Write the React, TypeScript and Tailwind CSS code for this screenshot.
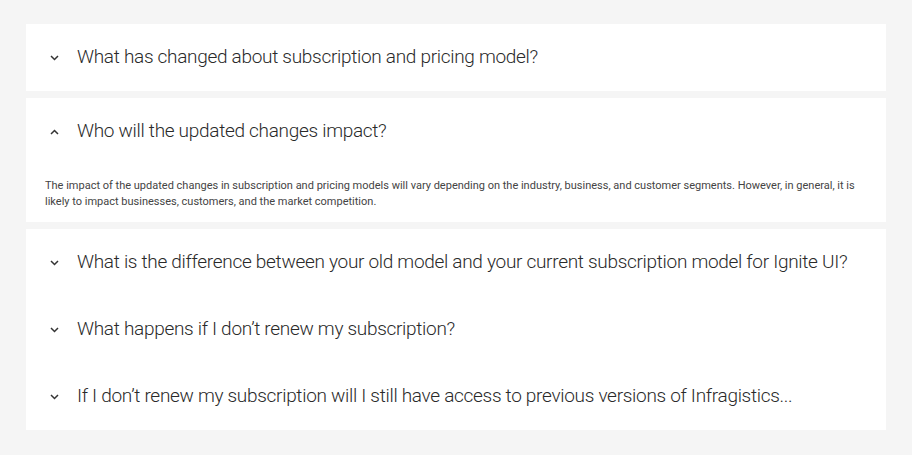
import { useState } from 'react'

const faqs = [
  { q: 'What has changed about subscription and pricing model?', a: '' },
  {
    q: 'Who will the updated changes impact?',
    a: 'The impact of the updated changes in subscription and pricing models will vary depending on the industry, business, and customer segments. However, in general, it is likely to impact businesses, customers, and the market competition.',
  },
  { q: 'What is the difference between your old model and your current subscription model for Ignite UI?', a: '' },
  { q: 'What happens if I don’t renew my subscription?', a: '' },
  { q: 'If I don’t renew my subscription will I still have access to previous versions of Infragistics...', a: '' },
]

function Chevron({ up }: { up: boolean }) {
  return (
    <svg width="9" height="6" viewBox="0 0 9 6" className={up ? 'rotate-180' : ''}>
      <polyline points="1,1 4.5,4.5 8,1" fill="none" stroke="#333" strokeWidth="1.5" />
    </svg>
  )
}

function Header({ q, open, onClick }: { q: string; open: boolean; onClick: () => void }) {
  return (
    <button onClick={onClick} className="h-[67px] w-full flex items-center text-left">
      <span className="w-[51px] shrink-0 flex justify-end pr-[18px]">
        <Chevron up={open} />
      </span>
      <span className="text-[19px] tracking-[-0.3px] font-light text-[#2a2a2a] whitespace-nowrap">{q}</span>
    </button>
  )
}

export default function App() {
  const [open, setOpen] = useState(1)

  return (
    <div className="min-h-[455px] bg-[#f5f5f5] pt-6 px-[26px] font-['Roboto',sans-serif]">
      <div className="w-[860px] flex flex-col gap-[7px]">
        <div className="bg-white">
          <Header q={faqs[0].q} open={open === 0} onClick={() => setOpen(open === 0 ? -1 : 0)} />
        </div>
        <div className="bg-white">
          <Header q={faqs[1].q} open={open === 1} onClick={() => setOpen(open === 1 ? -1 : 1)} />
          {open === 1 && (
            <p className="px-[19px] pt-[13px] pb-[12px] text-[11px] leading-4 text-[#444]">{faqs[1].a}</p>
          )}
        </div>
        <div className="bg-white">
          {faqs.slice(2).map((f, i) => (
            <Header key={i} q={f.q} open={open === i + 2} onClick={() => setOpen(open === i + 2 ? -1 : i + 2)} />
          ))}
        </div>
      </div>
    </div>
  )
}
